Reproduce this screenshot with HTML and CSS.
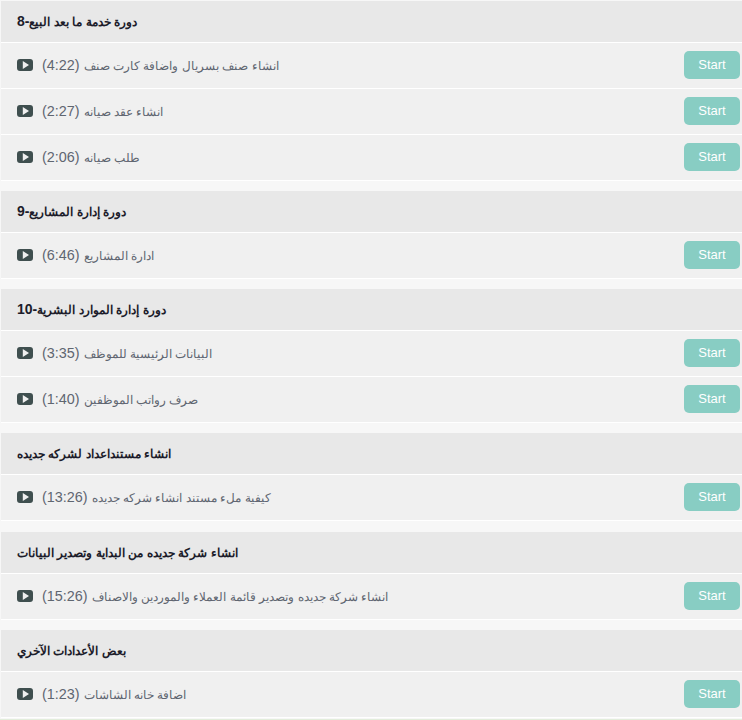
FILE: index.html
```html
<!DOCTYPE html>
<html lang="en">
<head>
    <meta charset="UTF-8">
    <meta name="viewport" content="width=device-width, initial-scale=1.0">
    <title>Courses</title>
    <link rel="stylesheet" href="styles.css">
</head>
<body>
    <svg class="icon-defs" width="0" height="0">
        <symbol id="play" viewBox="0 0 16 12">
            <path fill-rule="evenodd" d="M3 0h10a3 3 0 0 1 3 3v6a3 3 0 0 1-3 3H3a3 3 0 0 1-3-3V3a3 3 0 0 1 3-3zM5.8 2v8L12 6z"/>
        </symbol>
    </svg>

    <!-- Course 8 -->
    <section class="course">
        <h3 class="course-title"><span class="arabic">دورة خدمة ما بعد البيع</span>-8</h3>
        <div class="lesson">
            <svg class="play-icon"><use href="#play"/></svg>
            <span class="lesson-name"><span class="arabic">انشاء صنف بسريال واضافة كارت صنف</span> (4:22)</span>
            <button class="start-button">Start</button>
        </div>
        <div class="lesson">
            <svg class="play-icon"><use href="#play"/></svg>
            <span class="lesson-name"><span class="arabic">انشاء عقد صيانه</span> (2:27)</span>
            <button class="start-button">Start</button>
        </div>
        <div class="lesson">
            <svg class="play-icon"><use href="#play"/></svg>
            <span class="lesson-name"><span class="arabic">طلب صيانه</span> (2:06)</span>
            <button class="start-button">Start</button>
        </div>
    </section>

    <!-- Course 9 -->
    <section class="course">
        <h3 class="course-title"><span class="arabic">دورة إدارة المشاريع</span>-9</h3>
        <div class="lesson">
            <svg class="play-icon"><use href="#play"/></svg>
            <span class="lesson-name"><span class="arabic">ادارة المشاريع</span> (6:46)</span>
            <button class="start-button">Start</button>
        </div>
    </section>

    <!-- Course 10 -->
    <section class="course">
        <h3 class="course-title"><span class="arabic">دورة إدارة الموارد البشرية</span>-10</h3>
        <div class="lesson">
            <svg class="play-icon"><use href="#play"/></svg>
            <span class="lesson-name"><span class="arabic">البيانات الرئيسية للموظف</span> (3:35)</span>
            <button class="start-button">Start</button>
        </div>
        <div class="lesson">
            <svg class="play-icon"><use href="#play"/></svg>
            <span class="lesson-name"><span class="arabic">صرف رواتب الموظفين</span> (1:40)</span>
            <button class="start-button">Start</button>
        </div>
    </section>

    <!-- Opening document -->
    <section class="course">
        <h3 class="course-title"><span class="arabic">انشاء مستنداعداد لشركه جديده</span></h3>
        <div class="lesson">
            <svg class="play-icon"><use href="#play"/></svg>
            <span class="lesson-name"><span class="arabic">كيفية ملء مستند انشاء شركه جديده</span> (13:26)</span>
            <button class="start-button">Start</button>
        </div>
    </section>

    <!-- New company -->
    <section class="course">
        <h3 class="course-title"><span class="arabic">انشاء شركة جديده من البداية وتصدير البيانات</span></h3>
        <div class="lesson">
            <svg class="play-icon"><use href="#play"/></svg>
            <span class="lesson-name"><span class="arabic">انشاء شركة جديده وتصدير قائمة العملاء والموردين والاصناف</span> (15:26)</span>
            <button class="start-button">Start</button>
        </div>
    </section>

    <!-- Other settings -->
    <section class="course course-last">
        <h3 class="course-title"><span class="arabic">بعض الأعدادات الآخري</span></h3>
        <div class="lesson">
            <svg class="play-icon"><use href="#play"/></svg>
            <span class="lesson-name"><span class="arabic">اضافة خانه الشاشات</span> (1:23)</span>
            <button class="start-button">Start</button>
        </div>
    </section>

    <!-- Start of the green strip below the list -->
    <div class="bottom-strip"></div>
</body>
</html>
```

FILE: styles.css
```css
html {
    background-color: #f7f7f7;
}

body {
    margin: 0;
    padding: 1px 0 0 1px;
    font-family: "Liberation Sans", Arial, sans-serif;
    font-size: 14px;
    color: #555;
    background-color: #f7f7f7;
}

.icon-defs {
    display: block;
    height: 0;
}

/* One course block */
.course {
    margin-bottom: 10.15px;
}

.course-last {
    margin-bottom: 1px;
}

.course-title {
    margin: 0;
    height: 41px;
    padding-left: 16px;
    font-size: 14px;
    font-weight: bold;
    line-height: 40px;
    color: #1c1c2a;
    background-color: #e8e8e8;
    border-bottom: 1px solid #fff;
}

.course-title .arabic {
    font-size: 12.4px;
}

.lesson {
    display: flex;
    align-items: center;
    height: 45px;
    padding-left: 16px;
    padding-right: 2px;
    background-color: #f0f0f0;
    border-bottom: 1px solid #fff;
}

.play-icon {
    width: 16px;
    height: 12px;
    margin-right: 9px;
    margin-bottom: 1px;
    fill: #3f4f4f;
    flex-shrink: 0;
}

.lesson-name {
    flex: 1;
    margin-bottom: 1px;
    font-size: 14.4px;
    color: #5f6670;
}

.lesson-name .arabic {
    font-size: 12.2px;
}

.start-button {
    width: 56px;
    height: 28px;
    padding: 0 0 1px;
    margin-bottom: 1px;
    font-family: inherit;
    font-size: 13px;
    color: #fff;
    background-color: #88cdc3;
    border: none;
    border-radius: 5px;
}

.bottom-strip {
    height: 10px;
    margin-left: -1px;
    background-color: #e2eddb;
}
```
